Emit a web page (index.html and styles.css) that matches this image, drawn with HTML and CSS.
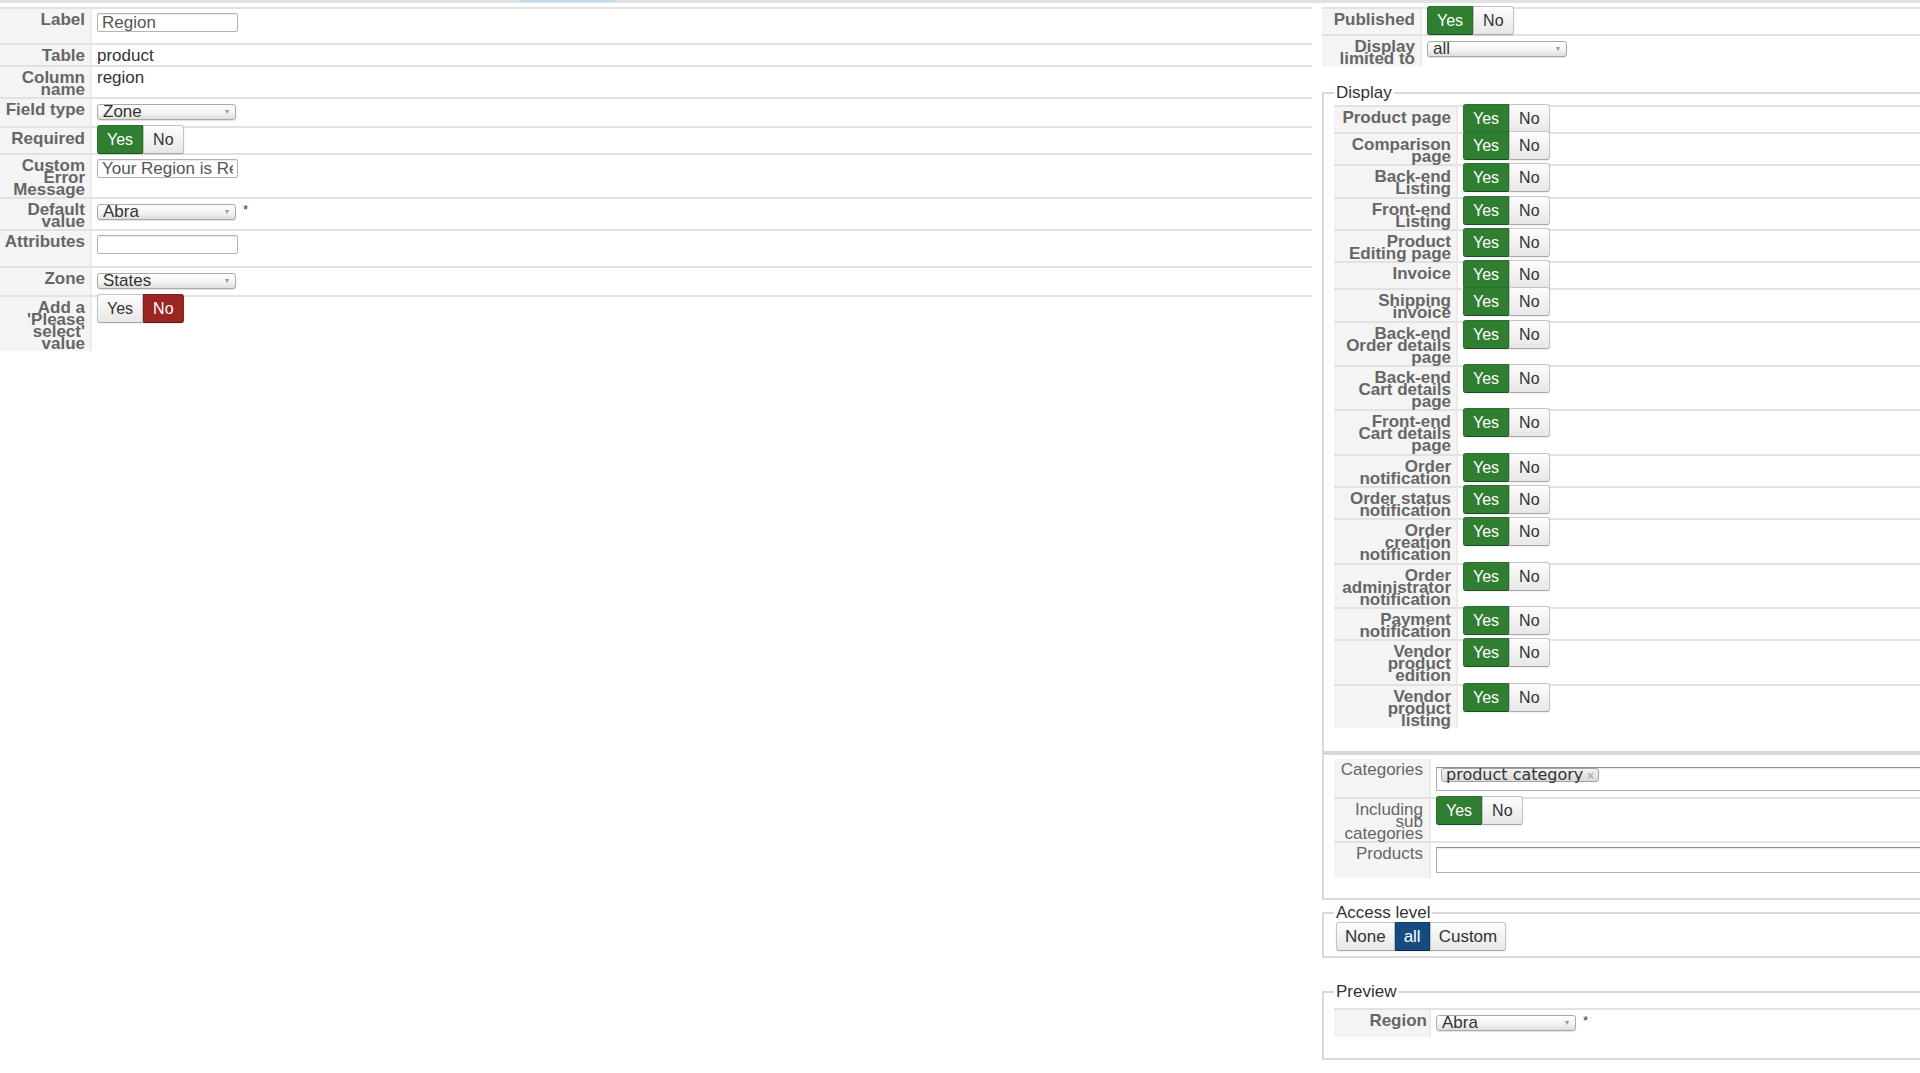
FILE: index.html
```
<!DOCTYPE html>
<html lang="en">
  <head>
    <meta charset="UTF-8" />
    <meta name="viewport" content="width=device-width, initial-scale=1.0" />
    <title>Custom field | Region</title>

    <link rel="stylesheet" href="styles.css">
  </head>
  <body>
    <div class="tabbar"><span class="tabbar-active"></span></div>
    <div class="field-edit">
      <div class="field-main">
        <table class="admintable main-table">
          <tr>
            <td class="key">Label</td>
            <td class="val"><input class="text-input" type="text" value="Region" /></td>
          </tr>
          <tr>
            <td class="key">Table</td>
            <td class="val val-text">product</td>
          </tr>
          <tr>
            <td class="key">Column name</td>
            <td class="val val-text">region</td>
          </tr>
          <tr>
            <td class="key">Field type</td>
            <td class="val">
              <div class="select"><span>Zone</span><span class="caret">▾</span></div>
            </td>
          </tr>
          <tr>
            <td class="key">Required</td>
            <td class="val val-toggle">
              <div class="btn-group">
                <button class="btn btn-yes active">Yes</button>
                <button class="btn btn-no">No</button>
              </div>
            </td>
          </tr>
          <tr>
            <td class="key">Custom Error Message</td>
            <td class="val"><input class="text-input" type="text" value="Your Region is Required" /></td>
          </tr>
          <tr>
            <td class="key">Default value</td>
            <td class="val">
              <div class="control-row">
                <div class="select"><span>Abra</span><span class="caret">▾</span></div>
                <span class="required-star">*</span>
              </div>
            </td>
          </tr>
          <tr>
            <td class="key">Attributes</td>
            <td class="val"><input class="text-input input-attributes" type="text" value="" /></td>
          </tr>
          <tr>
            <td class="key">Zone</td>
            <td class="val">
              <div class="select"><span>States</span><span class="caret">▾</span></div>
            </td>
          </tr>
          <tr>
            <td class="key">Add a 'Please select' value</td>
            <td class="val val-toggle">
              <div class="btn-group">
                <button class="btn btn-yes">Yes</button>
                <button class="btn btn-no active">No</button>
              </div>
            </td>
          </tr>
        </table>
      </div>

      <div class="field-side">
        <table class="admintable publish-table">
          <tr>
            <td class="key">Published</td>
            <td class="val val-toggle">
              <div class="btn-group">
                <button class="btn btn-yes active">Yes</button>
                <button class="btn btn-no">No</button>
              </div>
            </td>
          </tr>
          <tr>
            <td class="key">Display limited to</td>
            <td class="val">
              <div class="select select-wide"><span>all</span><span class="caret">▾</span></div>
            </td>
          </tr>
        </table>

        <fieldset class="group group-display">
          <legend>Display</legend>
          <table class="admintable display-table">
            <tr>
              <td class="key">Product page</td>
              <td class="val val-toggle"><div class="btn-group"><button class="btn btn-yes active">Yes</button><button class="btn btn-no">No</button></div></td>
            </tr>
            <tr>
              <td class="key">Comparison page</td>
              <td class="val val-toggle"><div class="btn-group"><button class="btn btn-yes active">Yes</button><button class="btn btn-no">No</button></div></td>
            </tr>
            <tr>
              <td class="key">Back-end Listing</td>
              <td class="val val-toggle"><div class="btn-group"><button class="btn btn-yes active">Yes</button><button class="btn btn-no">No</button></div></td>
            </tr>
            <tr>
              <td class="key">Front-end Listing</td>
              <td class="val val-toggle"><div class="btn-group"><button class="btn btn-yes active">Yes</button><button class="btn btn-no">No</button></div></td>
            </tr>
            <tr>
              <td class="key">Product Editing page</td>
              <td class="val val-toggle"><div class="btn-group"><button class="btn btn-yes active">Yes</button><button class="btn btn-no">No</button></div></td>
            </tr>
            <tr>
              <td class="key">Invoice</td>
              <td class="val val-toggle"><div class="btn-group"><button class="btn btn-yes active">Yes</button><button class="btn btn-no">No</button></div></td>
            </tr>
            <tr>
              <td class="key">Shipping invoice</td>
              <td class="val val-toggle"><div class="btn-group"><button class="btn btn-yes active">Yes</button><button class="btn btn-no">No</button></div></td>
            </tr>
            <tr>
              <td class="key">Back-end Order details page</td>
              <td class="val val-toggle"><div class="btn-group"><button class="btn btn-yes active">Yes</button><button class="btn btn-no">No</button></div></td>
            </tr>
            <tr>
              <td class="key">Back-end Cart details page</td>
              <td class="val val-toggle"><div class="btn-group"><button class="btn btn-yes active">Yes</button><button class="btn btn-no">No</button></div></td>
            </tr>
            <tr>
              <td class="key">Front-end Cart details page</td>
              <td class="val val-toggle"><div class="btn-group"><button class="btn btn-yes active">Yes</button><button class="btn btn-no">No</button></div></td>
            </tr>
            <tr>
              <td class="key">Order notification</td>
              <td class="val val-toggle"><div class="btn-group"><button class="btn btn-yes active">Yes</button><button class="btn btn-no">No</button></div></td>
            </tr>
            <tr>
              <td class="key">Order status notification</td>
              <td class="val val-toggle"><div class="btn-group"><button class="btn btn-yes active">Yes</button><button class="btn btn-no">No</button></div></td>
            </tr>
            <tr>
              <td class="key">Order creation notification</td>
              <td class="val val-toggle"><div class="btn-group"><button class="btn btn-yes active">Yes</button><button class="btn btn-no">No</button></div></td>
            </tr>
            <tr>
              <td class="key">Order administrator notification</td>
              <td class="val val-toggle"><div class="btn-group"><button class="btn btn-yes active">Yes</button><button class="btn btn-no">No</button></div></td>
            </tr>
            <tr>
              <td class="key">Payment notification</td>
              <td class="val val-toggle"><div class="btn-group"><button class="btn btn-yes active">Yes</button><button class="btn btn-no">No</button></div></td>
            </tr>
            <tr>
              <td class="key">Vendor product edition</td>
              <td class="val val-toggle"><div class="btn-group"><button class="btn btn-yes active">Yes</button><button class="btn btn-no">No</button></div></td>
            </tr>
            <tr>
              <td class="key">Vendor product listing</td>
              <td class="val val-toggle"><div class="btn-group"><button class="btn btn-yes active">Yes</button><button class="btn btn-no">No</button></div></td>
            </tr>
          </table>
        </fieldset>

        <fieldset class="group group-restrict">
          <table class="admintable restrict-table">
            <tr>
              <td class="key">Categories</td>
              <td class="val">
                <div class="tag-box">
                  <span class="tag">product category<span class="tag-remove">×</span></span>
                </div>
              </td>
            </tr>
            <tr>
              <td class="key">Including sub categories</td>
              <td class="val val-toggle">
                <div class="btn-group">
                  <button class="btn btn-yes active">Yes</button>
                  <button class="btn btn-no">No</button>
                </div>
              </td>
            </tr>
            <tr>
              <td class="key">Products</td>
              <td class="val"><input class="wide-input" type="text" value="" /></td>
            </tr>
          </table>
        </fieldset>

        <fieldset class="group group-access">
          <legend>Access level</legend>
          <div class="access-group">
            <button class="btn">None</button>
            <button class="btn active">all</button>
            <button class="btn">Custom</button>
          </div>
        </fieldset>

        <fieldset class="group group-preview">
          <legend>Preview</legend>
          <table class="admintable preview-table">
            <tr>
              <td class="key">Region</td>
              <td class="val">
                <div class="control-row">
                  <div class="select select-wide"><span>Abra</span><span class="caret">▾</span></div>
                  <span class="required-star">*</span>
                </div>
              </td>
            </tr>
          </table>
        </fieldset>
      </div>
    </div>
  </body>
</html>
```

FILE: styles.css
```
html {
  overflow: hidden;
}

body {
  margin: 0;
  font-family: "Liberation Sans", Arial, sans-serif;
  font-size: 17px;
  color: #333;
  background-color: #fff;
}

/* strip left over from the tab bar above the form */
.tabbar {
  height: 3px;
  background-color: #e1e1e1;
}

.tabbar-active {
  display: block;
  width: 95px;
  height: 2px;
  margin-left: 520px;
  background-color: #b9ddf3;
}

.field-edit {
  display: flex;
  align-items: flex-start;
  padding-top: 4px;
}

.field-main {
  flex: none;
  width: 1312px;
}

.field-side {
  flex: none;
  width: 690px;
  margin-left: 10px;
}

/* admin tables */
.admintable {
  width: 100%;
  border-collapse: separate;
  border-spacing: 0;
}

.admintable td {
  border-top: 2px solid #e2e2e2;
  vertical-align: top;
}

.admintable td.key {
  width: 83px;
  padding: 5px 5px 1px 2px;
  background-color: #f4f4f4;
  border-right: 2px solid #ebebeb;
  text-align: right;
  font-weight: bold;
  line-height: 12px;
  color: #666;
}

.admintable td.val {
  padding: 4px 5px 0;
  line-height: 18px;
}

.admintable td.val-text {
  padding-top: 2px;
}

.admintable td.val-toggle {
  padding-top: 0;
}

.publish-table td.key {
  width: 88px;
  padding-left: 5px;
}

.display-table td.key {
  width: 112px;
  padding-left: 5px;
  padding-bottom: 1.35px;
}

.restrict-table tr:first-child td {
  border-top: 0;
}

.restrict-table td.key {
  width: 84px;
  padding: 5px 6px 1px 5px;
  font-weight: normal;
}

.preview-table td.key {
  width: 88px;
  padding: 5px 2px 1px 5px;
}

/* form controls */
.text-input {
  display: block;
  box-sizing: border-box;
  width: 141px;
  height: 19px;
  margin: 0 0 11px;
  padding: 0 4px;
  border: 1px solid #b3b3b3;
  border-radius: 2px;
  box-shadow: inset 0 1px 1px rgba(0, 0, 0, 0.08);
  font-family: inherit;
  font-size: 17px;
  color: #555;
}

.input-attributes {
  margin-bottom: 12px;
}

.select {
  display: flex;
  justify-content: space-between;
  box-sizing: border-box;
  width: 139px;
  height: 16px;
  margin: 1px 0 6px;
  padding: 0 6px 0 5px;
  border: 1px solid #a9a9a9;
  border-radius: 3px;
  background: linear-gradient(#fff, #f3f3f3 55%, #dedede);
  box-shadow: 0 1px 1px rgba(0, 0, 0, 0.12);
  line-height: 14px;
  color: #333;
}

.select-wide {
  width: 140px;
}

.caret {
  align-self: center;
  font-size: 8px;
  line-height: 10px;
  color: #999;
}

.control-row {
  display: flex;
  align-items: flex-start;
}

.required-star {
  margin-left: 7px;
  font-size: 13px;
  line-height: 13px;
}

/* yes / no toggles */
.btn-group {
  display: flex;
  margin: -3px 0 -1px;
}

.btn {
  box-sizing: border-box;
  height: 29px;
  margin: 0;
  padding: 0 9px;
  border: 1px solid #c4c4c4;
  border-bottom-color: #a8a8a8;
  background: linear-gradient(#fdfdfd, #e7e7e7);
  box-shadow: 0 1px 2px rgba(0, 0, 0, 0.08);
  font-family: "Liberation Sans", Arial, sans-serif;
  font-size: 16px;
  line-height: 27px;
  color: #333;
}

.btn:first-child {
  border-radius: 3px 0 0 3px;
}

.btn:last-child {
  border-radius: 0 3px 3px 0;
}

.btn.active {
  color: #fff;
}

.btn-yes.active {
  background: #2f7e32;
  border-color: #2a6f2d;
  border-bottom-color: #1c4d1e;
}

.btn-no.active {
  background: #9a2621;
  border-color: #86201c;
  border-bottom-color: #611512;
}

/* fieldsets */
.group {
  min-width: 0;
  margin: 0;
  padding: 2px 10px 23px;
  border: 2px solid #d8d8d8;
}

.group legend {
  padding: 0 2px;
  font-size: 17px;
  line-height: 19px;
  color: #333;
}

.group-display {
  margin-top: 17px;
  padding-top: 3px;
}

.group-restrict {
  padding: 4px 10px 20px;
}

.group-access {
  margin-top: 3px;
  padding: 0 10px 5px;
}

.group-preview {
  margin-top: 24px;
  padding: 7px 10px 21px;
}

.tag-box {
  display: flex;
  align-items: flex-start;
  box-sizing: border-box;
  height: 24px;
  margin: 4px 0 6px;
  padding: 0 4px;
  border: 1px solid #adadad;
  border-top-color: #8e8e8e;
  box-shadow: inset 0 1px 2px rgba(0, 0, 0, 0.1);
}

.tag {
  display: inline-flex;
  align-items: flex-start;
  box-sizing: border-box;
  height: 14px;
  padding: 0 3px 0 4px;
  border: 1px solid #a3a3a3;
  border-radius: 3px;
  background: linear-gradient(#f2f2f2, #dadada);
  font-family: "DejaVu Sans", sans-serif;
  font-size: 16px;
  line-height: 12px;
  color: #333;
}

.tag-remove {
  margin: 1px 0 0 3px;
  font-size: 10px;
  line-height: 12px;
  color: #999;
}

.wide-input {
  display: block;
  box-sizing: border-box;
  width: 100%;
  height: 26px;
  margin: 0 0 5px;
  border: 1px solid #adadad;
  border-top-color: #8e8e8e;
  box-shadow: inset 0 1px 2px rgba(0, 0, 0, 0.1);
}

.access-group {
  display: flex;
  margin-left: 2px;
}

.access-group .btn {
  padding: 0 8px;
  font-size: 17px;
}

.access-group .btn.active {
  background: #154b80;
  border-color: #113f6c;
  border-bottom-color: #0a2b4b;
}
```
